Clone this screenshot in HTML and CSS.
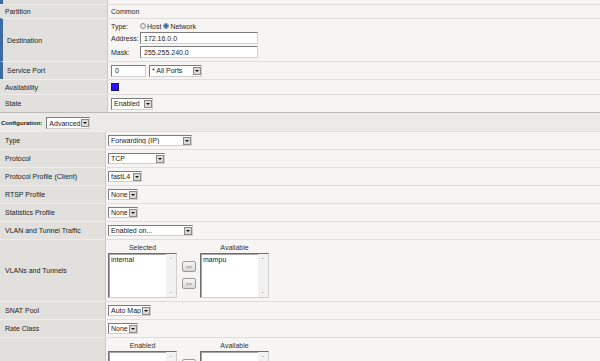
FILE: index.html
```html
<!DOCTYPE html>
<html>
<head>
<meta charset="utf-8">
<link rel="stylesheet" href="styles.css">
</head>
<body>
<div class="panel top">
  <div class="row first r0"><div class="label mark"></div><div class="value"></div></div>
  <div class="row rpart"><div class="label">Partition</div><div class="value">Common</div></div>
  <div class="row rdest">
    <div class="label mark">Destination</div>
    <div class="value dest">
      <div class="dest-grid">
        <span class="dl typeline">Type:</span>
        <span class="radios typeline"><i class="radio"></i><span class="rt">Host</span><i class="radio on"></i><span>Network</span></span>
        <span class="dl">Address:</span><span class="input wide">172.16.0.0</span>
        <span class="dl">Mask:</span><span class="input wide">255.255.240.0</span>
      </div>
    </div>
  </div>
  <div class="row rport">
    <div class="label mark">Service Port</div>
    <div class="value"><span class="input port">0</span><span class="select s-ports tall"><span class="st">* All Ports</span><span class="arrow"></span></span></div>
  </div>
  <div class="row ravail"><div class="label">Availability</div><div class="value"><span class="status"></span></div></div>
  <div class="row rstate"><div class="label">State</div><div class="value"><span class="select s-enabled tall"><span class="st">Enabled</span><span class="arrow"></span></span></div></div>
</div>

<div class="config"><b>Configuration:</b><span class="select s-adv tall"><span class="st">Advanced</span><span class="arrow"></span></span></div>

<div class="panel bottom">
  <div class="row"><div class="label">Type</div><div class="value"><span class="select s-fwd"><span class="st">Forwarding (IP)</span><span class="arrow"></span></span></div></div>
  <div class="row"><div class="label">Protocol</div><div class="value"><span class="select s-tcp"><span class="st">TCP</span><span class="arrow"></span></span></div></div>
  <div class="row"><div class="label">Protocol Profile (Client)</div><div class="value"><span class="select s-fast"><span class="st">fastL4</span><span class="arrow"></span></span></div></div>
  <div class="row"><div class="label">RTSP Profile</div><div class="value"><span class="select s-none"><span class="st">None</span><span class="arrow"></span></span></div></div>
  <div class="row"><div class="label">Statistics Profile</div><div class="value"><span class="select s-none"><span class="st">None</span><span class="arrow"></span></span></div></div>
  <div class="row"><div class="label">VLAN and Tunnel Traffic</div><div class="value"><span class="select s-enon"><span class="st">Enabled on...</span><span class="arrow"></span></span></div></div>
  <div class="row rvlan">
    <div class="label">VLANs and Tunnels</div>
    <div class="value dualcell">
      <div class="dual">
        <div class="listcol"><div class="lh">Selected</div><div class="listbox"><div class="items">internal</div><div class="sb"><i class="up"></i><i class="dn"></i></div></div></div>
        <div class="btns"><span class="btn">&lt;&lt;</span><span class="btn">&gt;&gt;</span></div>
        <div class="listcol"><div class="lh">Available</div><div class="listbox"><div class="items">mampu</div><div class="sb"><i class="up"></i><i class="dn"></i></div></div></div>
      </div>
    </div>
  </div>
  <div class="row"><div class="label">SNAT Pool</div><div class="value"><span class="select s-auto"><span class="st">Auto Map</span><span class="arrow"></span></span></div></div>
  <div class="row"><div class="label">Rate Class</div><div class="value"><span class="select s-none"><span class="st">None</span><span class="arrow"></span></span></div></div>
  <div class="row rlast">
    <div class="label"></div>
    <div class="value dualcell">
      <div class="dual">
        <div class="listcol"><div class="lh">Enabled</div><div class="listbox"><div class="items"></div><div class="sb"><i class="up"></i><i class="dn"></i></div></div></div>
        <div class="btns"><span class="btn"></span><span class="btn"></span></div>
        <div class="listcol"><div class="lh">Available</div><div class="listbox"><div class="items"></div><div class="sb"><i class="up"></i><i class="dn"></i></div></div></div>
      </div>
    </div>
  </div>
</div>
</body>
</html>
```

FILE: styles.css
```css
* { box-sizing: border-box; }
html, body { overflow: hidden; }
body {
  margin: 0;
  background: #ebeae6;
  font-family: "Liberation Sans", Arial, sans-serif;
  font-size: 7px;
  color: #1f1f1f;
}
.panel { background: #f6f5f3; }
.top { border-bottom: 1px solid #bdbcb8; }
.row { display: grid; grid-template-columns: 108px 1fr; }
.bottom .row { grid-template-columns: 106px 1fr; }
.label {
  background: #e1e0dc;
  border-right: 1px solid #cbcac6;
  border-top: 1px solid #eeede9;
  padding-left: 5px;
  display: flex;
  align-items: center;
  color: #222;
}
.value {
  border-top: 1px solid #dfdedb;
  padding-left: 3px;
  display: flex;
  align-items: center;
}
.bottom .value { padding-left: 2px; }
.first .label, .first .value { border-top: none; }
.mark { border-left: 3px solid #3c6ba3; padding-left: 4px; }

.r0 { height: 4px; }
.rpart { height: 14px; }
.rdest { height: 43px; }
.rport { height: 18px; }
.ravail { height: 15px; }
.rstate { height: 18px; }
.bottom .row { height: 18px; }
.bottom .rvlan { height: 62px; }
.bottom .rlast { height: 70px; }

.dest { align-items: flex-start; padding-top: 2px; }
.dest-grid {
  display: grid;
  grid-template-columns: 29px 118px;
  grid-template-rows: 10px 12px 12px;
  row-gap: 1px;
  align-items: center;
}
.dest-grid .input:last-child { margin-top: 2px; }
.dest-grid .dl:nth-last-child(2) { margin-top: 2px; }
.radios { display: flex; align-items: center; }
.radio {
  display: inline-block;
  width: 6px; height: 6px;
  border-radius: 50%;
  border: 1px solid #8d8d8d;
  background: #e9e9e9;
  margin-right: 1px;
}
.radio.on { background: radial-gradient(circle, #2e6fd6 0 1.6px, #e9e9e9 2px); }
.rt { margin-right: 2px; }

.input {
  display: inline-flex;
  align-items: center;
  height: 12px;
  background: #fff;
  border: 1px solid;
  border-color: #7c7c7c #d2d2d2 #d2d2d2 #7c7c7c;
  padding-left: 3px;
  color: #222;
}
.input.port { width: 35px; margin-right: 3px; }

.select {
  display: inline-flex;
  align-items: center;
  height: 11px;
  background: #fff;
  border: 1px solid;
  border-color: #7c7c7c #cfcfcf #cfcfcf #7c7c7c;
  padding-left: 2px;
  color: #222;
}
.select.tall { height: 12px; }
.st { flex: 1; white-space: nowrap; overflow: hidden; }
.arrow {
  width: 8px; height: 8px;
  background: #dcdad6;
  border: 1px solid #8a8a8a;
  display: flex;
  align-items: center;
  justify-content: center;
}
.arrow::after {
  content: "";
  border-left: 2px solid transparent;
  border-right: 2px solid transparent;
  border-top: 2px solid #111;
}
.s-ports { width: 53px; }
.s-enabled { width: 42px; }
.s-adv { width: 44px; }
.s-fwd { width: 84px; }
.s-tcp { width: 57px; }
.s-fast { width: 34px; }
.s-none { width: 30px; }
.s-enon { width: 85px; }
.s-auto { width: 43px; }

.status {
  width: 8px; height: 8px;
  background: #2a10f8;
  border: 1px solid #1a1a5a;
}

.config {
  height: 18px;
  display: flex;
  align-items: center;
  padding: 2px 0 0 1px;
}
.config b { font-size: 6px; margin-right: 4px; color: #1a1a1a; }

.dualcell { align-items: flex-start; padding-top: 2px; }
.dual { display: flex; align-items: flex-end; }
.listcol { display: flex; flex-direction: column; align-items: center; width: 69px; }
.lh { height: 11px; line-height: 11px; color: #333; }
.listbox {
  width: 69px; height: 45px;
  background: #fff;
  border: 1px solid;
  border-color: #6f6f6f #d0d0d0 #d0d0d0 #6f6f6f;
  box-shadow: inset 1px 1px 0 #a5a5a5;
  display: flex;
}
.items { flex: 1; padding: 2px 0 0 2px; color: #222; }
.sb {
  width: 10px;
  background: #f1f1f1;
  display: flex;
  flex-direction: column;
  justify-content: space-between;
  align-items: center;
  padding: 4px 0 4px;
}
.sb i { display: block; width: 0; height: 0; border-left: 1px solid transparent; border-right: 1px solid transparent; }
.sb .up { border-bottom: 1px solid #999; }
.sb .dn { border-top: 1px solid #999; }
.btns {
  display: flex;
  flex-direction: column;
  gap: 6px;
  margin: 0 4px 9px 5px;
}
.btn {
  width: 14px; height: 11px;
  border: 1px solid #9c9c9c;
  border-radius: 2px;
  background: linear-gradient(#f7f7f7, #d9d9d9);
  font-size: 5px;
  color: #555;
  display: flex;
  align-items: center;
  justify-content: center;
}
```
